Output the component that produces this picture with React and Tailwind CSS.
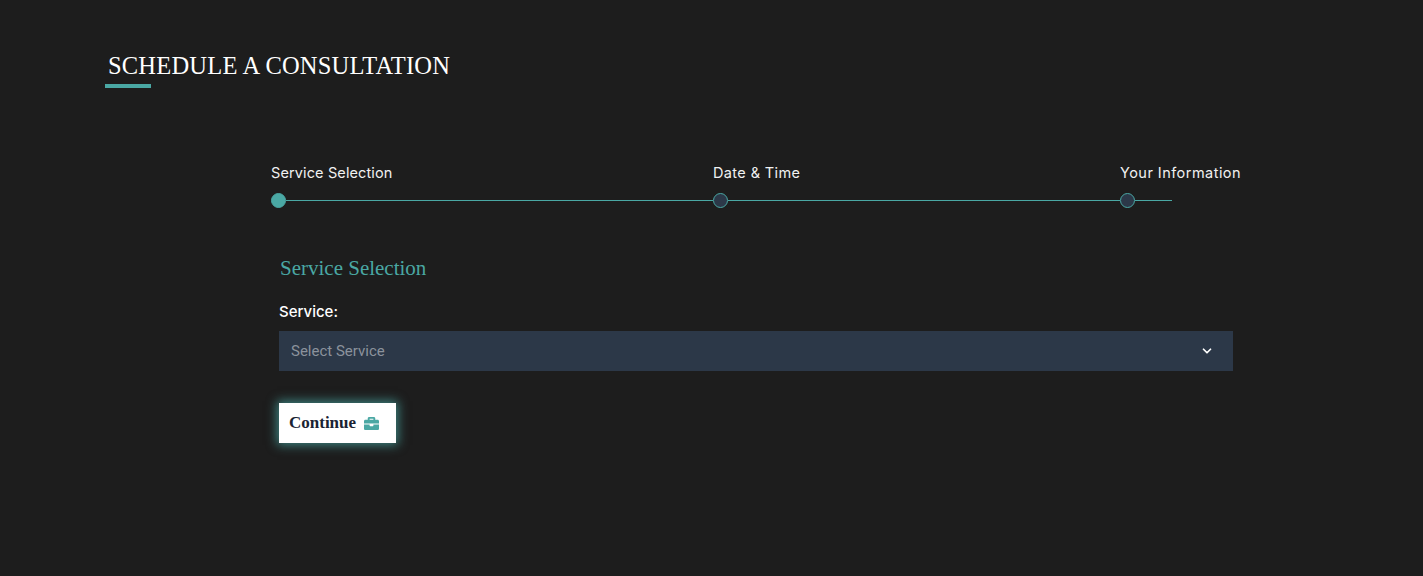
import React from 'react';
import { ChevronDown } from 'lucide-react';
import { FaBriefcase } from 'react-icons/fa';

const STEPS = [
  { label: 'Service Selection', width: 'w-[442px]', tracking: 'tracking-[0.12px]', active: true },
  { label: 'Date & Time', width: 'w-[407px]', tracking: 'tracking-[0.38px]', active: false },
  { label: 'Your Information', width: 'w-[52px]', tracking: 'tracking-[0.46px]', active: false },
];

function Step({ label, width, tracking, active }) {
  return (
    <div className={`${width} flex flex-col`}>
      <span className={`${tracking} h-5 whitespace-nowrap font-['Inter',sans-serif] text-[14.5px] leading-5 text-[#f1f1f1]`}>
        {label}
      </span>
      <div className="mt-[10px] flex items-center">
        <span
          className={
            active
              ? 'h-[15px] w-[15px] shrink-0 rounded-full border border-[#4aa8a4] bg-[#4aa8a4]'
              : 'h-[15px] w-[15px] shrink-0 rounded-full border border-[#4aa8a4] bg-[#2c3848]'
          }
        />
        <span className="h-px flex-1 bg-[#4aa8a4]" />
      </div>
    </div>
  );
}

export default function App() {
  return (
    <div className="min-h-[576px] bg-[#1d1d1d] pt-[50px] pl-[105px]">
      <div className="w-fit">
        <h1 className="pl-[3px] font-['Liberation_Serif',serif] text-[24.5px] leading-[32px] font-normal tracking-[0.2px] text-white">
          SCHEDULE A CONSULTATION
        </h1>
        <div className="mt-[2px] h-[4px] w-[46px] bg-[#4aa8a4]" />
      </div>

      <div className="mt-[75px] ml-[166px] flex">
        {STEPS.map((step) => (
          <Step key={step.label} {...step} />
        ))}
      </div>

      <div className="mt-[45px] ml-[174px] w-[954px]">
        <h2 className="pl-px font-['Liberation_Serif',serif] text-[21px] leading-[30px] font-normal text-[#4aa8a4]">
          Service Selection
        </h2>
        <label className="mt-[19px] block font-['Inter',sans-serif] text-[15px] leading-5 font-medium text-white">
          Service:
        </label>
        <div className="mt-[9px] flex h-[40px] items-center justify-between bg-[#2c3848] pr-[19px] pl-3">
          <span className="font-['Roboto',sans-serif] text-[15px] text-[#8b929c]">Select Service</span>
          <ChevronDown size={14} strokeWidth={3} className="text-white" />
        </div>
        <button className="mt-[32px] flex h-[40px] w-[117px] items-center gap-2 bg-white pl-[10px] shadow-[0_0_10px_2px_rgba(74,168,164,0.75)]">
          <span className="font-['Liberation_Serif',serif] text-[17px] font-bold text-[#1a2333]">Continue</span>
          <FaBriefcase size={15} className="text-[#4aa8a4]" />
        </button>
      </div>
    </div>
  );
}
